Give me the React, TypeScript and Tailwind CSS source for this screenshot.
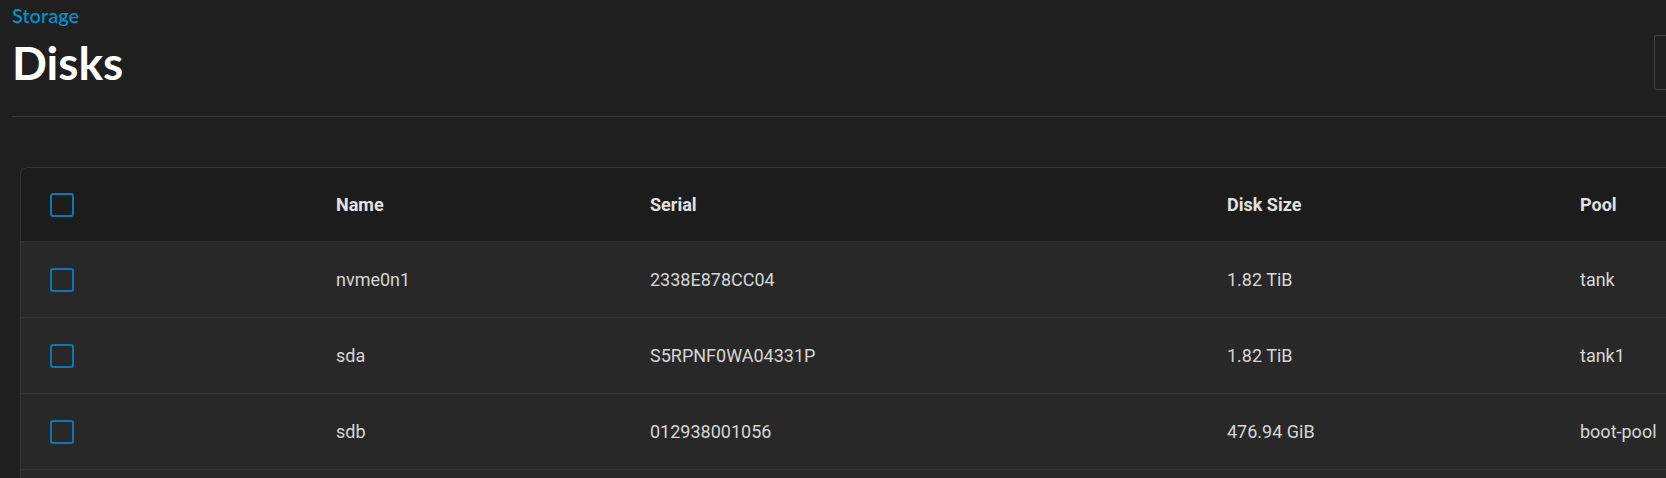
const disks = [
  { name: 'nvme0n1', serial: '2338E878CC04', size: '1.82 TiB', pool: 'tank' },
  { name: 'sda', serial: 'S5RPNF0WA04331P', size: '1.82 TiB', pool: 'tank1' },
  { name: 'sdb', serial: '012938001056', size: '476.94 GiB', pool: 'boot-pool' },
];

function Checkbox() {
  return <div className="w-6 h-6 rounded-[3px] border-2 border-[#0b78b1]" />;
}

const cols = 'grid grid-cols-[315px_314px_577px_353px_1fr] items-center';

export default function App() {
  return (
    <div className="w-screen h-screen overflow-hidden bg-[#1f1f1f]">
      <div className="w-[1900px] pl-3" style={{ fontFamily: 'Roboto, sans-serif' }}>
        {/* Page header */}
        <div className="flex items-start border-b border-[#3a3a3a] h-[117px]">
          <div className="w-[1642px] shrink-0 pt-[3px]" style={{ fontFamily: 'Lato, sans-serif' }}>
            <div className="text-[20px] leading-6 font-medium text-[#0095d5]">Storage</div>
            <h1 className="text-[46px] leading-[56px] font-bold text-white mt-[8px]">Disks</h1>
          </div>
          <div className="w-[234px] h-[55px] mt-[35px] border border-[#444] rounded-[2px]" />
        </div>

        {/* Disks table */}
        <div className="mt-[50px] ml-2 rounded-tl-lg border-l border-t border-[#333] overflow-hidden">
          <div className={`${cols} h-[74px] bg-[#1c1c1c] text-[18px] font-bold text-[#e2e2e2] border-b border-[#333]`}>
            <div className="pl-[29px]">
              <Checkbox />
            </div>
            <div>Name</div>
            <div>Serial</div>
            <div>Disk Size</div>
            <div>Pool</div>
          </div>
          {disks.map((d) => (
            <div
              key={d.name}
              className={`${cols} h-[76px] bg-[#282828] text-[18px] text-[#d6d6d6] border-b border-[#333]`}
            >
              <div className="pl-[29px]">
                <Checkbox />
              </div>
              <div>{d.name}</div>
              <div>{d.serial}</div>
              <div>{d.size}</div>
              <div>{d.pool}</div>
            </div>
          ))}
          <div className="h-[76px] bg-[#282828]" />
        </div>
      </div>
    </div>
  );
}
